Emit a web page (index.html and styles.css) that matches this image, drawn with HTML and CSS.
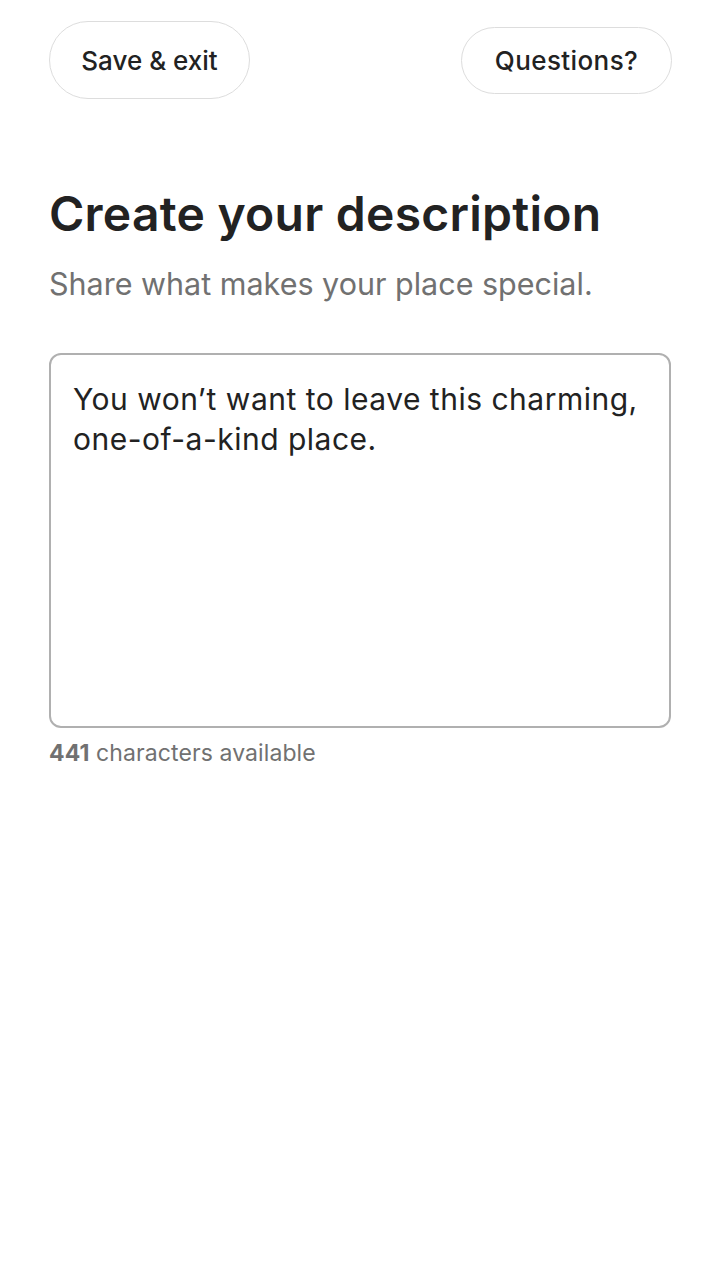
FILE: index.html
```html
<!DOCTYPE html>
<html>
<head>
<meta charset="utf-8">
<link rel="stylesheet" href="styles.css">
</head>
<body>
<div class="page">
  <header class="top">
    <button class="pill pill-save">Save &amp; exit</button>
    <button class="pill pill-q">Questions?</button>
  </header>
  <main class="content">
    <h1 class="title">Create your description</h1>
    <p class="subtitle">Share what makes your place special.</p>
    <div class="field">
      <div class="field-text">You won’t want to leave this charming, one-of-a-kind place.</div>
    </div>
    <p class="counter"><b>441</b> characters available</p>
  </main>
</div>
</body>
</html>
```
FILE: styles.css
```css
* { box-sizing: border-box; }
html, body { margin: 0; padding: 0; background: #fff; }
body { font-family: Inter, "Noto Sans", "Liberation Sans", sans-serif; color: #222; }
.page { padding: 21px 49px 0 49px; }
.top { display: flex; justify-content: space-between; align-items: center; height: 78px; }
.pill {
  font-family: inherit;
  background: #fff;
  color: #222;
  border: 1.5px solid #dddddd;
  border-radius: 999px;
  font-size: 26px;
  font-weight: 500;
  padding: 0;
}
.pill-save { width: 201px; height: 78px; }
.pill-q { width: 211px; height: 67px; margin-right: -1px; letter-spacing: 0.4px; }
.content { padding-top: 87px; }
.title { margin: 0; font-size: 48px; font-weight: 600; letter-spacing: 0.25px; line-height: 56px; color: #222; }
.subtitle { margin: 22px 0 0; font-size: 30.5px; font-weight: 400; color: #717171; line-height: 40px; }
.field { margin-top: 49px; height: 375px; border: 2px solid #b0b0b0; border-radius: 12px; padding: 24px 22px; }
.field-text { font-size: 30px; line-height: 40px; color: #222; letter-spacing: 0.5px; }
.counter { margin: 10px 0 0; font-size: 23px; color: #717171; line-height: 30px; letter-spacing: 0.1px; }
.counter b { font-weight: 700; }
```
